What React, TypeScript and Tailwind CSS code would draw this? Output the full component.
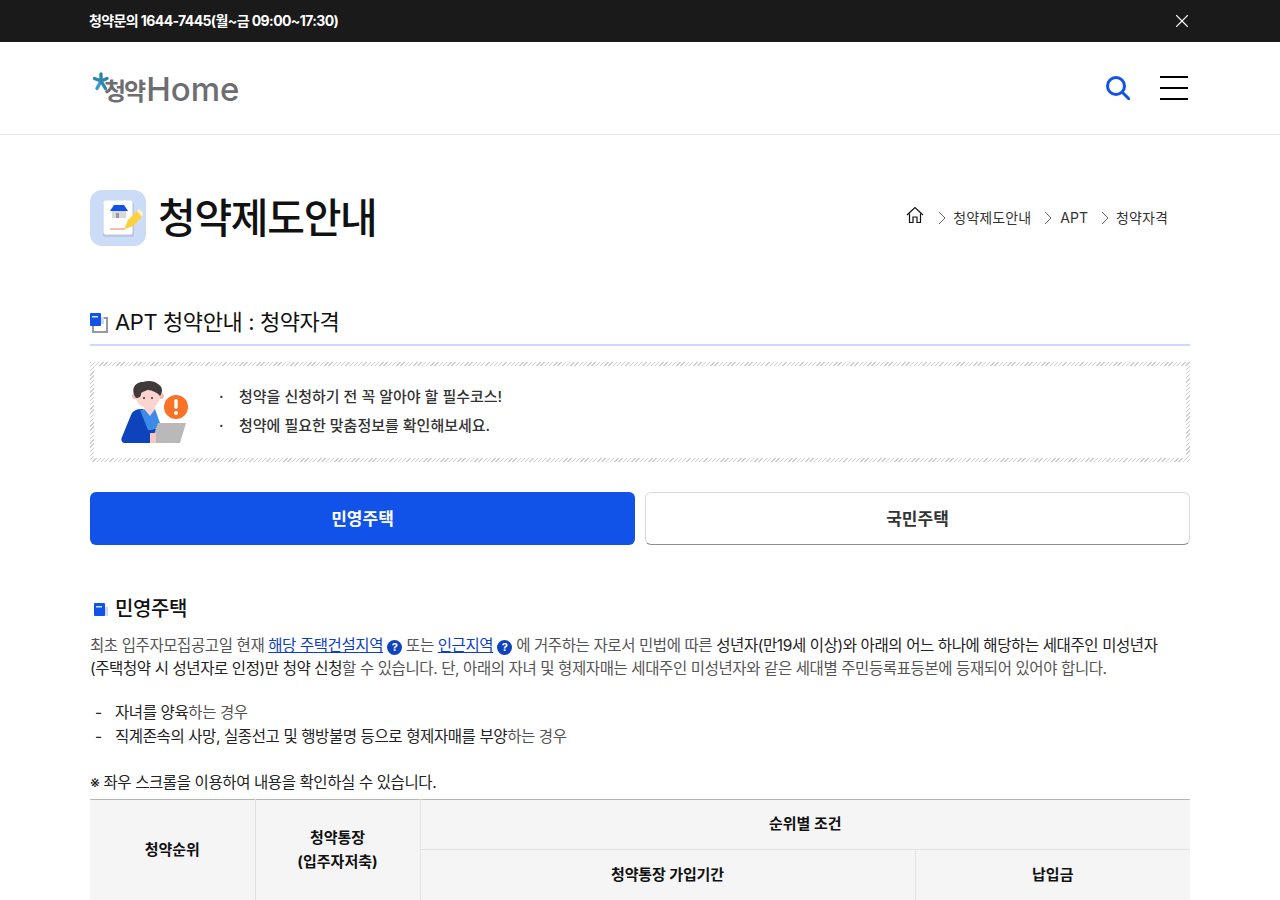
import { X } from 'lucide-react'

const font = { fontFamily: 'Inter, "Noto Sans CJK KR", sans-serif' }

function Help() {
  return (
    <span className="inline-flex w-[15px] h-[15px] mx-[4px] rounded-full bg-[#0e43bb] text-white text-[11px] font-bold items-center justify-center align-[0px] leading-none">
      ?
    </span>
  )
}

function Crumb() {
  return (
    <svg width="8" height="14" viewBox="0 0 8 14" fill="none" stroke="#666" strokeWidth="1">
      <path d="M1 1 L7 7 L1 13" />
    </svg>
  )
}

function Logo() {
  return (
    <div className="flex items-center h-[34px] w-[150px] relative text-[#6d6e71] leading-none whitespace-nowrap">
      <svg className="absolute left-[2px] top-[1px]" width="18" height="20" viewBox="0 0 18 20">
        <g stroke="#2a86ad" strokeWidth="3.4" strokeLinecap="round">
          <path d="M9 9 L9 2" />
          <path d="M9 9 L2.5 6.5" />
          <path d="M9 9 L15 6.5" />
          <path d="M9 9 L5 16.5" stroke="#3b9cc4" />
          <path d="M9 9 L13.5 16.5" />
        </g>
      </svg>
      <span className="ml-[14px] mt-[8px] text-[24px] font-semibold tracking-[-2px]">청약</span>
      <span className="ml-[2px] mt-[3px] text-[33px] font-medium">Home</span>
    </div>
  )
}

function PageIcon() {
  return (
    <div className="w-[56px] h-[56px] rounded-[12px] bg-[#ccdcf7] shrink-0">
      <svg width="56" height="56" viewBox="0 0 56 56">
        <rect x="13" y="12" width="31" height="35" rx="2" fill="#b9c7e2" />
        <rect x="13.5" y="10.5" width="29" height="34" rx="2" fill="#fff" />
        <path d="M22 21 L22 28 L36 28 L36 21 Z" fill="#d9d9d9" />
        <path d="M20 21 L24 15 L34 15 L38 21 Z" fill="#1152e8" />
        <rect x="26" y="23" width="3" height="5" fill="#999" />
        <path d="M20 39 L35 39" stroke="#ef7b55" strokeWidth="1" />
        <path d="M34 39.5 L38 30 L47 21 L52 27 L43 36 Z" fill="#fbd13c" />
        <path d="M47 21 L49 19 L53 23 L52 27 Z" fill="#fff2cf" />
      </svg>
    </div>
  )
}

function Person() {
  return (
    <svg width="70" height="66" viewBox="0 0 70 66">
      <circle cx="56" cy="28" r="12" fill="#f97226" />
      <rect x="54.3" y="20" width="3.4" height="10" rx="1.7" fill="#fff" />
      <circle cx="56" cy="34" r="2" fill="#fff" />
      <path d="M4 64 C1 63 1 60 2 58 L11 36 C13 31 17 30 23 30 L37 52 L32 64 Z" fill="#0e43bb" />
      <path d="M20 31 L27 30 L35 30 L41 47 L32 51 L28 51 Z" fill="#3b8ce8" />
      <circle cx="15" cy="17" r="3" fill="#f6b9b6" />
      <circle cx="41" cy="17" r="3" fill="#f6b9b6" />
      <path d="M23 25 L25 31 L30 37 L35 30 L35 25 Z" fill="#fbd3cf" />
      <ellipse cx="28" cy="18" rx="12" ry="11" fill="#fbd3cf" />
      <path d="M16 19 C10 10 15 3 23 3 C28 1 35 2 38 5 C43 8 43 13 40 17 C36 12 30 11 27 11 C24 13 21 13 21 15 C21 18 19 19 16 19 Z" fill="#403a3a" />
      <circle cx="24" cy="19" r="1" fill="#333" />
      <circle cx="32" cy="19" r="1" fill="#333" />
      <path d="M38 44 L66 44 L60 64 L31 64 Z" fill="#b9b9b9" />
      <path d="M30 54 L36 54 L36 64 L30 64 Z" fill="#f9c7c2" />
    </svg>
  )
}

export default function App() {
  return (
    <div className="h-[900px] overflow-hidden bg-white text-[#111]" style={font}>
      {/* top notice */}
      <div className="h-[42px] bg-[#1a1a1a]">
        <div className="w-[1100px] mx-auto h-full flex items-center justify-between">
          <p className="text-[14px] font-bold text-white tracking-[-0.6px] -mt-[1px] -ml-[1px]">청약문의 1644-7445(월~금 09:00~17:30)</p>
          <X size={22} strokeWidth={1.2} className="text-white -mr-[3px]" />
        </div>
      </div>

      {/* header */}
      <header className="h-[93px] border-b border-[#e5e5e5]">
        <div className="w-[1100px] mx-auto h-full flex items-center justify-between">
          <Logo />
          <div className="flex items-center gap-[30px] pr-[2px]">
            <svg width="24" height="24" viewBox="0 0 24 24" fill="none" stroke="#1152e8" strokeWidth="3" strokeLinecap="round">
              <circle cx="10" cy="10" r="8.5" />
              <path d="M16.5 16.5 L22.8 22.8" />
            </svg>
            <div className="w-[28px] flex flex-col gap-[8.5px]">
              <span className="h-[2.5px] bg-black" />
              <span className="h-[2.5px] bg-black" />
              <span className="h-[2.5px] bg-black" />
            </div>
          </div>
        </div>
      </header>

      <main className="w-[1100px] mx-auto">
        {/* title */}
        <div className="mt-[55px] flex items-center justify-between">
          <div className="flex items-center gap-[12px]">
            <PageIcon />
            <h1 className="text-[41px] font-medium tracking-[-1.3px] leading-none text-[#111]">청약제도안내</h1>
          </div>
          <nav className="flex items-center pr-[22px] -mt-[1px] text-[14px] text-[#333] tracking-[0.1px]">
            <svg width="18" height="18" viewBox="0 0 18 18" fill="none" stroke="#111" strokeWidth="1.2" className="-mt-[5px] mr-[14px]">
              <path d="M1 9 L9 1.5 L17 9" />
              <path d="M3.5 7.5 L3.5 16.5 L7 16.5 L7 11 L11 11 L11 16.5 L14.5 16.5 L14.5 7.5" />
            </svg>
            <Crumb />
            <span className="ml-[7px] mr-[13px]">청약제도안내</span>
            <Crumb />
            <span className="ml-[8px] mr-[13px]">APT</span>
            <Crumb />
            <span className="ml-[7px]">청약자격</span>
          </nav>
        </div>

        {/* section heading */}
        <div className="mt-[58px] h-[42px] flex items-center gap-[7px] border-b-2 border-[#ccd9f7] pb-[4px]">
          <svg width="18" height="20" viewBox="0 0 18 20" className="mt-[1px]">
            <rect x="3" y="5" width="14" height="14" fill="#fff" stroke="#9a9a9a" strokeWidth="2" />
            <rect x="0" y="0" width="11" height="13" rx="1" fill="#1152e8" />
            <rect x="2" y="3" width="6" height="1.5" fill="#cfe0ff" />
            <rect x="11" y="4" width="3" height="7" fill="#cdd9f7" />
          </svg>
          <h2 className="text-[22px] font-normal tracking-[-0.4px]">APT 청약안내 : 청약자격</h2>
        </div>

        {/* notice box */}
        <div className="mt-[16px] h-[100px] p-[4px] bg-[repeating-linear-gradient(135deg,#cfcfcf_0px,#cfcfcf_1px,#ffffff_1px,#ffffff_3px)]">
          <div className="h-full bg-white flex items-center pl-[26px]">
            <Person />
            <ul className="ml-[29px] -mt-[1px] flex flex-col gap-[6px] text-[15px] font-medium text-[#333]">
              <li className="flex"><span className="w-[20px]">·</span>청약을 신청하기 전 꼭 알아야 할 필수코스!</li>
              <li className="flex"><span className="w-[20px]">·</span>청약에 필요한 맞춤정보를 확인해보세요.</li>
            </ul>
          </div>
        </div>

        {/* tabs */}
        <div className="mt-[30px] grid grid-cols-2 gap-[10px]">
          <button className="h-[53px] pt-[2px] rounded-[6px] bg-[#1152e8] text-white text-[17px] font-bold">민영주택</button>
          <button className="h-[53px] pt-[2px] rounded-[6px] bg-white border border-[#d3d9e8] border-b-[#8f8f8f] text-[#333] text-[17px] font-bold">국민주택</button>
        </div>

        {/* content */}
        <div className="mt-[50px] flex items-center gap-[7px] h-[28px]">
          <svg width="18" height="18" viewBox="0 0 18 18" className="mt-[2px]">
            <rect x="12" y="6" width="6" height="9" fill="#cdd9f7" />
            <rect x="4" y="2" width="11" height="13" rx="1" fill="#1152e8" />
            <rect x="6" y="5" width="6" height="1.5" fill="#cfe0ff" />
          </svg>
          <h3 className="text-[20px] font-medium tracking-[-0.4px]">민영주택</h3>
        </div>

        <p className="mt-[11px] text-[15.5px] leading-[23px] text-[#555] tracking-[-0.4px] break-keep">
          최초 입주자모집공고일 현재 <a className="text-[#0e3fbd] underline">해당 주택건설지역</a>
          <Help />
          또는 <a className="text-[#0e3fbd] underline">인근지역</a>
          <Help />
          에 거주하는 자로서 민법에 따른 <span className="text-[#222]">성년자(만19세 이상)와 아래의 어느 하나에 해당하는 세대주인 미성년자 (주택청약 시 성년자로 인정)만 청약 신청</span>할 수 있습니다. 단, 아래의 자녀 및 형제자매는 세대주인 미성년자와 같은 세대별 주민등록표등본에 등재되어 있어야 합니다.
        </p>

        <ul className="mt-[21px] text-[15.5px] leading-[23.5px] text-[#555] tracking-[-0.4px]">
          <li className="flex"><span className="w-[25px] pl-[5px] text-[#222]">-</span><span><span className="text-[#222]">자녀를 양육</span>하는 경우</span></li>
          <li className="flex"><span className="w-[25px] pl-[5px] text-[#222]">-</span><span><span className="text-[#222]">직계존속의 사망, 실종선고 및 행방불명 등으로 형제자매를 부양</span>하는 경우</span></li>
        </ul>

        <p className="mt-[23px] text-[15.5px] leading-[23px] text-[#222] tracking-[-0.4px]">※ 좌우 스크롤을 이용하여 내용을 확인하실 수 있습니다.</p>

        {/* table */}
        <table className="mt-[5px] w-full table-fixed border-collapse border-t border-[#b5b5b5] text-[15px] font-bold text-[#111]">
          <colgroup>
            <col className="w-[165px]" />
            <col className="w-[165px]" />
            <col className="w-[495px]" />
            <col className="w-[275px]" />
          </colgroup>
          <thead className="bg-[#f5f5f5]">
            <tr className="h-[50px]">
              <th rowSpan={2} className="border-r border-[#e2e2e2] font-bold">청약순위</th>
              <th rowSpan={2} className="border-r border-[#e2e2e2] font-bold leading-[24px]">청약통장<br />(입주자저축)</th>
              <th colSpan={2} className="border-b border-[#e2e2e2] font-bold">순위별 조건</th>
            </tr>
            <tr className="h-[50px]">
              <th className="border-r border-[#e2e2e2] font-bold tracking-[-0.1px]">청약통장 가입기간</th>
              <th className="font-bold">납입금</th>
            </tr>
          </thead>
        </table>
      </main>
    </div>
  )
}
